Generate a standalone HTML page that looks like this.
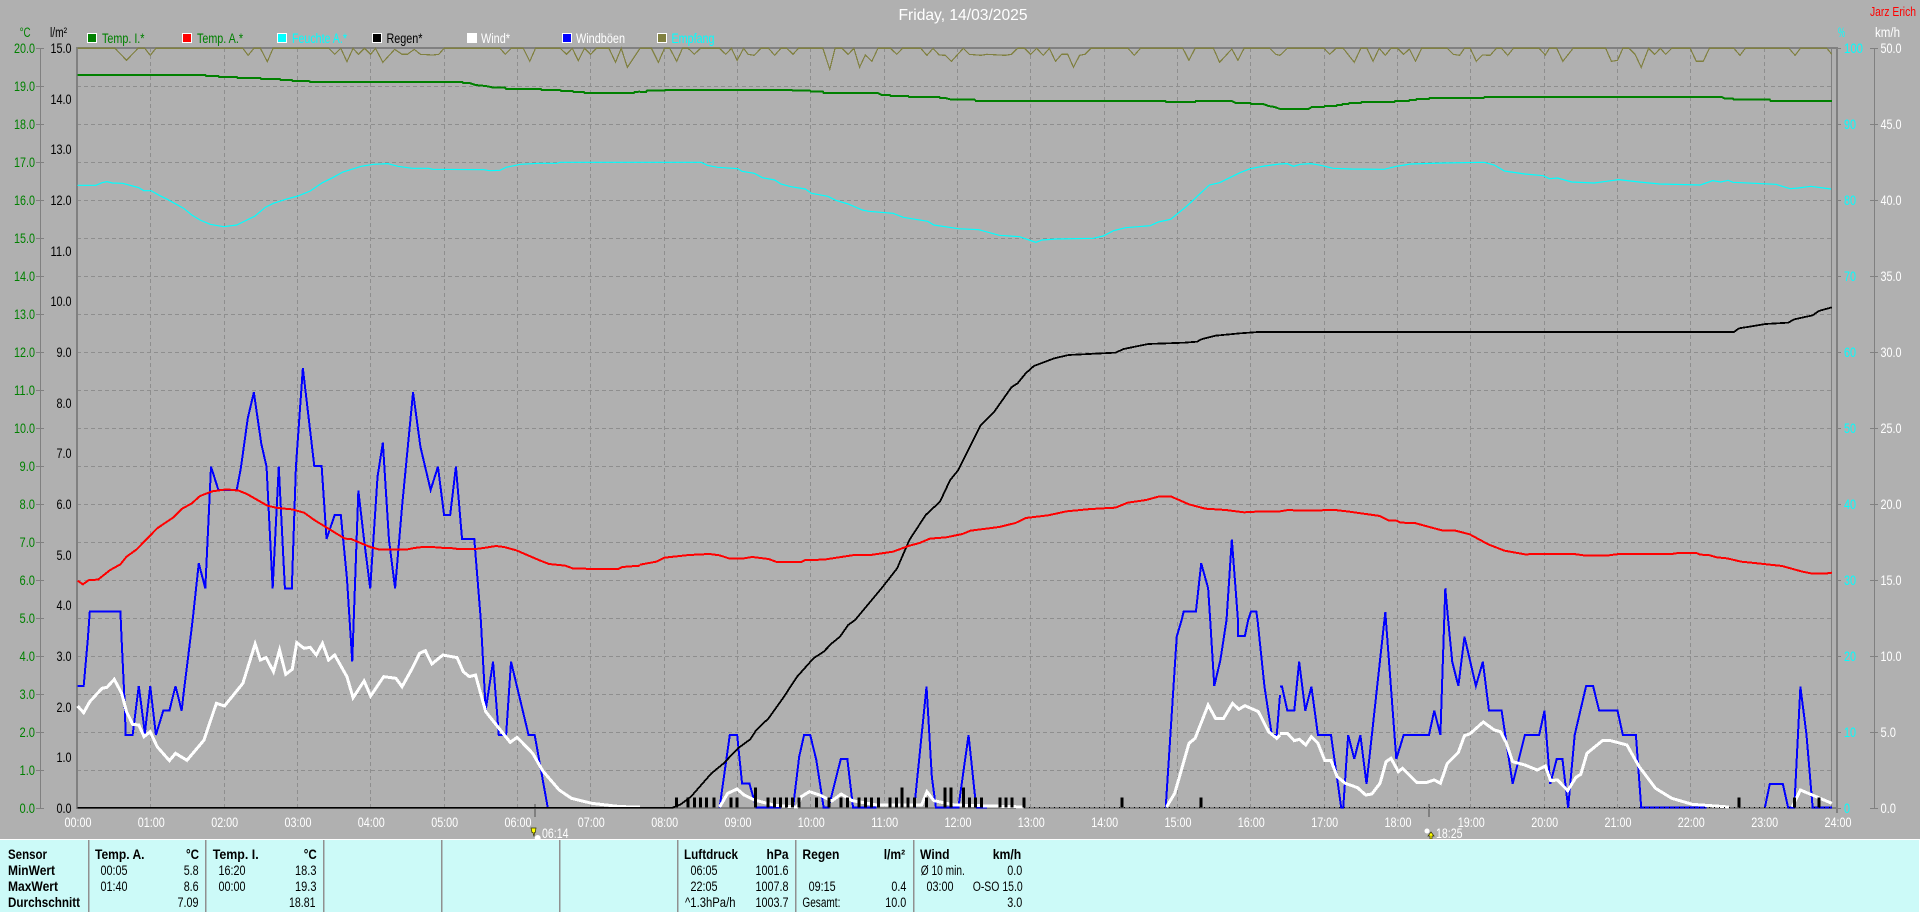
<!DOCTYPE html>
<html lang="de"><head><meta charset="utf-8"><title>Friday, 14/03/2025</title>
<style>
html,body{margin:0;padding:0;background:#b0b0b0;overflow:hidden}
svg{display:block}
text{font-family:"Liberation Sans",sans-serif;font-size:13.5px}
.l polyline,.l path{fill:none;vector-effect:non-scaling-stroke;stroke-linejoin:miter;shape-rendering:crispEdges}
.l .smooth polyline{shape-rendering:auto}
.gr{fill:#008000}.bk{fill:#000}.cy{fill:#0ff}.wh{fill:#fff}
.b{font-weight:bold;fill:#000}.n{fill:#000}
</style></head><body>
<svg width="1920" height="912" viewBox="0 0 1920 912" xmlns="http://www.w3.org/2000/svg">
<rect width="1920" height="912" fill="#b0b0b0"/>
<!-- grid -->
<path shape-rendering="crispEdges" fill="none" stroke="#8e8e8e" stroke-dasharray="4 3" d="M77 86.5H1832M77 124.5H1832M77 162.5H1832M77 200.5H1832M77 238.5H1832M77 276.5H1832M77 314.5H1832M77 352.5H1832M77 390.5H1832M77 428.5H1832M77 466.5H1832M77 504.5H1832M77 542.5H1832M77 580.5H1832M77 618.5H1832M77 656.5H1832M77 694.5H1832M77 732.5H1832M77 770.5H1832"/>
<path shape-rendering="crispEdges" fill="none" stroke="#8e8e8e" stroke-dasharray="4 3" d="M150.5 48V808M224.5 48V808M297.5 48V808M370.5 48V808M444.5 48V808M517.5 48V808M590.5 48V808M664.5 48V808M737.5 48V808M810.5 48V808M884.5 48V808M957.5 48V808M1030.5 48V808M1104.5 48V808M1177.5 48V808M1250.5 48V808M1324.5 48V808M1397.5 48V808M1470.5 48V808M1544.5 48V808M1617.5 48V808M1690.5 48V808M1764.5 48V808"/>
<!-- axes -->
<g shape-rendering="crispEdges" fill="#808080">
<rect x="76" y="47" width="1762" height="2"/>
<rect x="76" y="48" width="2" height="760"/>
<rect x="1831" y="48" width="1" height="760"/>
<rect x="1836" y="47" width="2" height="766"/>
<rect x="40" y="48" width="1" height="760"/>
<rect x="1874" y="48" width="1" height="760"/>
<rect x="76" y="807" width="1762" height="2"/>
<rect x="534" y="804" width="2" height="13"/>
<rect x="1428" y="804" width="2" height="13"/>
</g>
<path shape-rendering="crispEdges" stroke="#808080" fill="none" d="M36 48.5H44M36 86.5H44M36 124.5H44M36 162.5H44M36 200.5H44M36 238.5H44M36 276.5H44M36 314.5H44M36 352.5H44M36 390.5H44M36 428.5H44M36 466.5H44M36 504.5H44M36 542.5H44M36 580.5H44M36 618.5H44M36 656.5H44M36 694.5H44M36 732.5H44M36 770.5H44M36 808.5H44"/>
<path shape-rendering="crispEdges" stroke="#808080" fill="none" d="M1837 48.5H1841M1837 124.5H1841M1837 200.5H1841M1837 276.5H1841M1837 352.5H1841M1837 428.5H1841M1837 504.5H1841M1837 580.5H1841M1837 656.5H1841M1837 732.5H1841M1837 808.5H1841M1870 48.5H1878M1870 124.5H1878M1870 200.5H1878M1870 276.5H1878M1870 352.5H1878M1870 428.5H1878M1870 504.5H1878M1870 580.5H1878M1870 656.5H1878M1870 732.5H1878M1870 808.5H1878"/>

<!-- series -->
<g class="l" transform="scale(.40816 .33333)">
<!-- Empfang -->
<g stroke="#808040" stroke-width="1.2">
<polyline points="190,145 282,145 310,181 338,145 355,145 368,166 382,145 595,145 608,166 622,145 638,145 655,185 669,145 806,145 820,163 835,145 850,185 865,145 878,163 893,145 908,163 920,145 938,187 967,148 985,163 998,163 1015,148 1030,163 1060,165 1075,163 1088,145 1225,145 1238,163 1252,145 1282,145 1298,184 1312,145 1373,145 1388,163 1402,145 1417,182 1432,145 1447,163 1461,145 1492,145 1508,187 1522,145 1537,202 1568,145"/>
<polyline transform="translate(1568 0)" points="0,145 28,145 45,187 60,145 73,145 90,184 104,145 118,145 133,163 148,145 195,145 210,163 224,145 238,181 254,145 265,163 280,166 296,145 315,145 330,166 345,145 360,145 375,163 388,145 448,145 465,208 478,145 495,145 510,163 524,145 538,202 552,165 568,184 583,145 614,145 629,163 643,145 688,145 703,166 718,145 733,165 748,166 763,184 792,145 807,163 835,166 850,163 895,166 910,163 925,145 942,145 957,163 972,145 988,166 1003,145 1018,184 1033,163 1048,163 1062,202 1077,166 1090,163 1105,145 1196,145 1211,166 1226,145 1330,145 1345,181 1360,145 1405,145 1420,187 1450,147 1465,181 1480,145 1543,145 1558,163 1568,166"/>
<polyline transform="translate(3136 0)" points="0,166 18,145 108,145 122,163 137,145 155,145 182,187 198,145 213,145 228,184 243,145 258,166 272,145 288,145 303,163 317,147 332,184 347,145 410,145 425,163 440,166 452,145 466,145 481,184 496,165 515,166 530,145 543,145 558,166 572,145 635,145 650,165 660,145 678,145 693,184 718,145 798,145 812,184 827,181 840,145 855,145 870,163 885,202 903,145 918,163 932,145 945,163 960,145 1005,145 1020,184 1037,184 1052,145 1112,145 1127,166 1140,145 1247,145 1262,166 1275,145 1340,145 1352,163"/>
</g>
<!-- Windboeen -->
<g stroke="#0000ff" stroke-width="2">
<polyline transform="translate(0 1020)" points="190,1038 205,1038 215,900 220,815 295,815 298,900 305,1080 308,1185 325,1185 340,1038 355,1180 368,1038 382,1185 400,1112 415,1112 430,1038 445,1112 452,1038 462,940 472,840 487,670 503,745 517,380 535,450 580,450 590,385 607,235 622,157 640,310 653,380 668,745 683,380 698,745 715,745 725,380 742,85 770,378 788,378 800,597 820,525 835,525 850,715 863,964 878,452 892,600 907,745 925,410 938,308 953,600 968,745 985,500 1012,157 1030,320 1055,450 1073,380 1088,525 1103,525 1117,380 1132,597 1162,597 1178,840 1190,1110 1208,965 1222,1185 1240,1185 1252,965 1295,1185 1310,1185 1342,1403"/>
<polyline transform="translate(1568 1860)" points="195,563 220,345 238,345 250,490 268,490 285,563 345,563"/>
<polyline transform="translate(1568 1860)" points="375,563 390,410 402,345 417,345 432,420 450,563 462,563 492,417 508,417 522,563 580,563"/>
<polyline transform="translate(1568 1860)" points="672,563 690,345 702,200 715,470 725,563 780,563 805,345 820,520 825,563 850,563"/>
<polyline transform="translate(1568 1860)" points="1288,563 1315,50 1327,0 1332,-25 1362,-25 1375,-170 1392,-95 1397,0 1407,198 1422,120 1437,0 1450,-242 1465,0 1465,48 1482,48 1490,0 1497,-25 1510,-25 1513,0 1530,200 1548,345 1560,345 1568,225"/>
<polyline transform="translate(3136 1860)" points="0,200 5,200 18,272 35,272 47,125 62,272 77,200 93,345 125,345 150,563 155,563 167,345 182,417 197,345 212,492 258,-24 285,417 303,345 365,345 378,272 393,345 405,-95 412,0 422,125 437,198 452,50 480,198 497,125 512,272 543,272 570,492 600,345 635,345 648,272 662,492 678,417 692,417 706,563 722,345 750,198 767,198 782,272 827,272 840,345 872,345 885,563 1045,563"/>
<polyline transform="translate(3136 1860)" points="1188,563 1200,492 1232,492 1245,563 1260,563 1275,200 1290,345 1305,563 1352,563"/>
</g>
<!-- Wind -->
<g stroke="#ffffff" stroke-width="3">
<polyline transform="translate(0 1860)" points="190,258 205,278 220,245 250,205 262,202 280,178 298,220 310,275 325,313 340,315 353,350 368,335 385,380 415,422 430,400 458,421 500,360 530,250 550,258 595,190 625,72 638,120 652,113 670,155 685,90 700,163 716,148 727,68 745,85 760,82 775,105 790,70 805,120 820,105 850,170 865,233 892,183 908,228 940,170 970,175 985,200 1010,145 1028,100 1042,92 1058,132 1085,105 1120,113 1135,155 1150,170 1165,165 1190,275 1250,367 1267,352 1305,400 1330,453 1370,510 1400,535 1450,550 1520,560 1568,561"/>
<polyline transform="translate(1568 1860)" points="195,561 215,520 238,507 255,525 280,540 330,556 385,561 395,530 415,515 440,525 470,543 493,522 520,542 580,555 690,555 703,515 720,542 770,555 860,558 940,561"/>
<polyline transform="translate(1568 1860)" points="1290,561 1310,520 1345,370 1360,355 1392,255 1410,295 1430,295 1452,250 1467,268 1482,257 1515,275 1540,335 1560,355 1568,345"/>
<polyline transform="translate(3136 1860)" points="0,340 18,340 35,362 48,358 63,375 77,350 93,370 110,422 125,422 140,470 160,490 190,503 210,525 225,522 245,490 260,425 272,415 290,455 300,445 335,487 360,487 378,480 393,490 410,430 437,397 452,347 465,342 498,306 525,330 540,335 555,370 570,425 600,435 630,450 650,438 663,482 680,480 705,512 725,472 737,463 752,400 790,362 810,362 850,375 880,440 920,505 960,535 1010,553 1100,561"/>
<polyline transform="translate(3136 1860)" points="1255,561 1275,510 1352,550"/>
</g>
<!-- rain bars -->
<path transform="translate(1568 1860)" stroke="#000" stroke-width="3" d="M90 563V532M118 563V532M133 563V532M148 563V532M163 563V532M181 563V532M223 563V532M238 563V532M283 563V502M314 563V532M329 563V532M344 563V532M359 563V532M374 563V532M389 563V532M432 563V532M463 563V532M492 563V532M508 563V532M537 563V532M552 563V532M567 563V532M584 563V532M613 563V532M628 563V532M642 563V502M657 563V532M672 563V532M702 563V532M747 563V502M762 563V502M792 563V502M807 563V532M822 563V532M837 563V532M882 563V532M897 563V532M912 563V532M941 563V532M1181 563V532M1375 563V532"/>
<path transform="translate(3136 1860)" stroke="#000" stroke-width="3" d="M1125 563V532M1260 563V532M1321 563V532"/>
<!-- Regen -->
<g stroke="#000" stroke-width="1.8">
<polyline transform="translate(0 1860)" points="190,563 1568,563"/>
<polyline transform="translate(1568 1860)" points="0,563 80,563 100,553 125,530 175,460 205,430 240,385 270,358 285,330 315,295 350,235 385,170 425,115 450,95 470,70 490,50 510,15 527,0"/>
<polyline transform="translate(1568 900)" points="527,960 595,860 630,805 660,720 700,645 735,605 760,540 780,510 835,375 868,335 910,262 925,250 945,220 965,198 1015,175 1050,165 1165,158 1185,147 1245,132 1335,128 1365,125 1375,118 1410,107 1470,100 1515,96 1568,96"/>
<polyline transform="translate(3136 900)" points="0,96 1112,96 1125,85 1190,72 1245,68 1260,58 1305,46 1320,33 1352,22"/>
</g>
<!-- Feuchte -->
<g class="smooth" stroke="#00ffff" stroke-width="1.2">
<polyline points="190,556 235,556 250,548 262,545 275,549 300,550 325,558 340,563 352,572 370,572 390,586 410,598 450,625 470,645 490,660 515,673 548,680 580,675 600,663 625,648 650,622 670,610 700,598 730,588 760,573 790,548 815,533 840,516 885,499 915,493 950,491 975,499 1010,505 1050,505 1060,508 1185,509 1200,512 1225,511 1240,502 1275,493 1320,490 1365,490 1372,487 1568,487"/>
<polyline transform="translate(1568 0)" points="0,487 150,487 165,496 190,502 240,506 250,514 280,520 300,533 330,540 345,552 370,560 405,567 420,580 460,589 480,601 510,612 545,630 560,634 620,640 645,652 705,664 720,675 780,686 830,689 880,706 930,710 960,723 970,727 985,720 1020,717 1110,715 1135,708 1160,692 1190,683 1250,677 1270,666 1300,658 1340,618 1395,555 1420,548 1470,518 1495,506 1530,498 1568,492"/>
<polyline transform="translate(3136 0)" points="0,492 18,491 33,499 50,493 75,491 100,496 130,505 175,507 255,508 285,499 320,492 400,489 500,487 525,495 550,513 600,522 645,527 660,536 680,534 715,546 770,549 800,544 830,539 880,546 930,552 1030,555 1060,542 1080,546 1098,541 1110,547 1215,553 1250,566 1270,564 1300,559 1350,567"/>
</g>
<!-- Temp A -->
<g stroke="#ff0000" stroke-width="2">
<polyline transform="translate(0 1020)" points="190,722 203,733 218,720 240,719 270,690 295,673 310,650 335,628 385,565 425,532 445,507 470,490 490,468 520,454 555,448 585,452 605,462 655,497 680,504 715,508 745,518 770,540 810,570 845,596 860,597 905,620 930,629 995,629 1015,624 1035,621 1075,622 1085,624 1115,625 1120,627 1165,627 1185,624 1215,618 1235,621 1265,631 1320,660 1345,672 1385,677 1405,686 1515,687 1525,681 1568,677"/>
<polyline transform="translate(1568 900)" points="0,794 40,785 60,773 90,769 120,765 170,762 195,766 220,776 250,776 275,771 315,777 335,786 395,786 405,780 450,779 525,765 565,765 620,755 660,737 685,729 710,716 750,712 790,702 810,692 880,681 920,669 945,654 1000,646 1045,634 1105,627 1165,623 1195,608 1240,600 1270,590 1300,589 1345,613 1385,626 1435,630 1480,637 1510,635 1568,635"/>
<polyline transform="translate(3136 900)" points="0,634 20,630 50,632 95,632 110,630 135,630 170,635 245,648 265,661 285,662 295,668 330,669 375,684 400,692 430,692 465,703 510,733 550,752 600,763 640,762 720,762 750,767 800,767 830,762 960,762 975,759 1020,759 1030,764 1050,765 1070,772 1095,775 1130,785 1170,790 1230,798 1280,815 1305,821 1335,821 1352,818"/>
</g>
<!-- Temp I -->
<g stroke="#008000" stroke-width="2">
<polyline points="190,225 503,225 505,228 535,228 537,231 580,231 582,234 638,234 640,237 686,237 688,240 715,240 717,243 757,243 760,246 1133,246 1135,249 1150,249 1165,255 1190,258 1210,263 1237,263 1240,267 1325,267 1327,270 1372,270 1375,273 1403,273 1405,276 1430,276 1433,279 1553,279 1555,276 1568,275"/>
<polyline transform="translate(1568 0)" points="0,276 15,276 17,272 60,272 62,270 372,270 375,272 417,272 419,275 448,275 450,279 583,279 587,282 592,285 612,285 614,288 657,288 659,291 733,291 735,294 748,294 763,299 820,299 823,303 1287,303 1289,306 1360,306 1362,303 1450,303 1460,309 1495,309 1497,312 1527,312 1540,318 1555,321 1568,327"/>
<polyline transform="translate(3136 0)" points="0,327 70,327 78,321 108,321 110,318 138,318 140,315 152,315 154,312 168,312 170,309 198,309 200,306 280,306 282,303 316,303 318,300 333,300 335,297 365,297 367,294 499,294 501,291 1082,291 1090,296 1110,296 1112,299 1200,299 1202,303 1352,303"/>
</g>
</g>
<!-- baseline dots -->
<path shape-rendering="crispEdges" stroke="#000" fill="none" stroke-dasharray="1 4" d="M1024 807.5H1830"/>

<!-- title -->
<text x="898.5" y="20" style="font-size:16px" class="wh" textLength="129" lengthAdjust="spacingAndGlyphs">Friday, 14/03/2025</text>
<text x="1870" y="16" style="font-size:13px" fill="#ff0000" textLength="46" lengthAdjust="spacingAndGlyphs">Jarz Erich</text>
<text x="19.6" y="37" class="gr" textLength="11" lengthAdjust="spacingAndGlyphs">°C</text>
<text x="50" y="37" class="bk" textLength="17" lengthAdjust="spacingAndGlyphs">l/m²</text>
<text x="1838" y="37" class="cy" textLength="7" lengthAdjust="spacingAndGlyphs">%</text>
<text x="1875" y="37" class="wh" textLength="25" lengthAdjust="spacingAndGlyphs">km/h</text>

<!-- legend -->
<g shape-rendering="crispEdges" stroke="#fff">
<rect x="87.5" y="33.5" width="9" height="9" fill="#008000"/>
<rect x="182.5" y="33.5" width="9" height="9" fill="#ff0000"/>
<rect x="277.5" y="33.5" width="9" height="9" fill="#00ffff"/>
<rect x="372.5" y="33.5" width="9" height="9" fill="#000"/>
<rect x="467.5" y="33.5" width="9" height="9" fill="#fff"/>
<rect x="562.5" y="33.5" width="9" height="9" fill="#0000ff"/>
<rect x="657.5" y="33.5" width="9" height="9" fill="#808040"/>
</g>
<g>
<text x="102" y="43" class="gr" textLength="42.5" lengthAdjust="spacingAndGlyphs">Temp. I.*</text>
<text x="197" y="43" class="gr" textLength="46" lengthAdjust="spacingAndGlyphs">Temp. A.*</text>
<text x="292" y="43" class="cy" textLength="55" lengthAdjust="spacingAndGlyphs">Feuchte A.*</text>
<text x="386.5" y="43" class="bk" textLength="36" lengthAdjust="spacingAndGlyphs">Regen*</text>
<text x="481" y="43" class="wh" textLength="29" lengthAdjust="spacingAndGlyphs">Wind*</text>
<text x="576" y="43" class="wh" textLength="49" lengthAdjust="spacingAndGlyphs">Windböen</text>
<text x="671.5" y="43" class="cy" textLength="43" lengthAdjust="spacingAndGlyphs">Empfang</text>
</g>

<!-- green axis labels -->
<g class="gr">
<text x="14" y="53" textLength="21" lengthAdjust="spacingAndGlyphs">20.0</text>
<text x="14" y="91" textLength="21" lengthAdjust="spacingAndGlyphs">19.0</text>
<text x="14" y="129" textLength="21" lengthAdjust="spacingAndGlyphs">18.0</text>
<text x="14" y="167" textLength="21" lengthAdjust="spacingAndGlyphs">17.0</text>
<text x="14" y="205" textLength="21" lengthAdjust="spacingAndGlyphs">16.0</text>
<text x="14" y="243" textLength="21" lengthAdjust="spacingAndGlyphs">15.0</text>
<text x="14" y="281" textLength="21" lengthAdjust="spacingAndGlyphs">14.0</text>
<text x="14" y="319" textLength="21" lengthAdjust="spacingAndGlyphs">13.0</text>
<text x="14" y="357" textLength="21" lengthAdjust="spacingAndGlyphs">12.0</text>
<text x="14" y="395" textLength="21" lengthAdjust="spacingAndGlyphs">11.0</text>
<text x="14" y="433" textLength="21" lengthAdjust="spacingAndGlyphs">10.0</text>
<text x="19.5" y="471" textLength="15.5" lengthAdjust="spacingAndGlyphs">9.0</text>
<text x="19.5" y="509" textLength="15.5" lengthAdjust="spacingAndGlyphs">8.0</text>
<text x="19.5" y="547" textLength="15.5" lengthAdjust="spacingAndGlyphs">7.0</text>
<text x="19.5" y="585" textLength="15.5" lengthAdjust="spacingAndGlyphs">6.0</text>
<text x="19.5" y="623" textLength="15.5" lengthAdjust="spacingAndGlyphs">5.0</text>
<text x="19.5" y="661" textLength="15.5" lengthAdjust="spacingAndGlyphs">4.0</text>
<text x="19.5" y="699" textLength="15.5" lengthAdjust="spacingAndGlyphs">3.0</text>
<text x="19.5" y="737" textLength="15.5" lengthAdjust="spacingAndGlyphs">2.0</text>
<text x="19.5" y="775" textLength="15.5" lengthAdjust="spacingAndGlyphs">1.0</text>
<text x="19.5" y="813" textLength="15.5" lengthAdjust="spacingAndGlyphs">0.0</text>
</g>
<!-- black axis labels -->
<g class="bk">
<text x="50.5" y="53" textLength="21" lengthAdjust="spacingAndGlyphs">15.0</text>
<text x="50.5" y="104" textLength="21" lengthAdjust="spacingAndGlyphs">14.0</text>
<text x="50.5" y="154" textLength="21" lengthAdjust="spacingAndGlyphs">13.0</text>
<text x="50.5" y="205" textLength="21" lengthAdjust="spacingAndGlyphs">12.0</text>
<text x="50.5" y="256" textLength="21" lengthAdjust="spacingAndGlyphs">11.0</text>
<text x="50.5" y="306" textLength="21" lengthAdjust="spacingAndGlyphs">10.0</text>
<text x="56.5" y="357" textLength="15" lengthAdjust="spacingAndGlyphs">9.0</text>
<text x="56.5" y="408" textLength="15" lengthAdjust="spacingAndGlyphs">8.0</text>
<text x="56.5" y="458" textLength="15" lengthAdjust="spacingAndGlyphs">7.0</text>
<text x="56.5" y="509" textLength="15" lengthAdjust="spacingAndGlyphs">6.0</text>
<text x="56.5" y="560" textLength="15" lengthAdjust="spacingAndGlyphs">5.0</text>
<text x="56.5" y="610" textLength="15" lengthAdjust="spacingAndGlyphs">4.0</text>
<text x="56.5" y="661" textLength="15" lengthAdjust="spacingAndGlyphs">3.0</text>
<text x="56.5" y="712" textLength="15" lengthAdjust="spacingAndGlyphs">2.0</text>
<text x="56.5" y="762" textLength="15" lengthAdjust="spacingAndGlyphs">1.0</text>
<text x="56.5" y="813" textLength="15" lengthAdjust="spacingAndGlyphs">0.0</text>
</g>
<!-- percent labels -->
<g class="cy">
<text x="1844" y="53" textLength="19" lengthAdjust="spacingAndGlyphs">100</text>
<text x="1844" y="129" textLength="12" lengthAdjust="spacingAndGlyphs">90</text>
<text x="1844" y="205" textLength="12" lengthAdjust="spacingAndGlyphs">80</text>
<text x="1844" y="281" textLength="12" lengthAdjust="spacingAndGlyphs">70</text>
<text x="1844" y="357" textLength="12" lengthAdjust="spacingAndGlyphs">60</text>
<text x="1844" y="433" textLength="12" lengthAdjust="spacingAndGlyphs">50</text>
<text x="1844" y="509" textLength="12" lengthAdjust="spacingAndGlyphs">40</text>
<text x="1844" y="585" textLength="12" lengthAdjust="spacingAndGlyphs">30</text>
<text x="1844" y="661" textLength="12" lengthAdjust="spacingAndGlyphs">20</text>
<text x="1844" y="737" textLength="12" lengthAdjust="spacingAndGlyphs">10</text>
<text x="1844" y="813" textLength="6" lengthAdjust="spacingAndGlyphs">0</text>
</g>
<!-- km/h labels -->
<g class="wh">
<text x="1880.5" y="53" textLength="21" lengthAdjust="spacingAndGlyphs">50.0</text>
<text x="1880.5" y="129" textLength="21" lengthAdjust="spacingAndGlyphs">45.0</text>
<text x="1880.5" y="205" textLength="21" lengthAdjust="spacingAndGlyphs">40.0</text>
<text x="1880.5" y="281" textLength="21" lengthAdjust="spacingAndGlyphs">35.0</text>
<text x="1880.5" y="357" textLength="21" lengthAdjust="spacingAndGlyphs">30.0</text>
<text x="1880.5" y="433" textLength="21" lengthAdjust="spacingAndGlyphs">25.0</text>
<text x="1880.5" y="509" textLength="21" lengthAdjust="spacingAndGlyphs">20.0</text>
<text x="1880.5" y="585" textLength="21" lengthAdjust="spacingAndGlyphs">15.0</text>
<text x="1880.5" y="661" textLength="21" lengthAdjust="spacingAndGlyphs">10.0</text>
<text x="1880.5" y="737" textLength="15.5" lengthAdjust="spacingAndGlyphs">5.0</text>
<text x="1880.5" y="813" textLength="15.5" lengthAdjust="spacingAndGlyphs">0.0</text>
</g>
<!-- hour labels -->
<g class="wh">
<text x="64.5" y="827" textLength="27" lengthAdjust="spacingAndGlyphs">00:00</text>
<text x="137.8" y="827" textLength="27" lengthAdjust="spacingAndGlyphs">01:00</text>
<text x="211.2" y="827" textLength="27" lengthAdjust="spacingAndGlyphs">02:00</text>
<text x="284.5" y="827" textLength="27" lengthAdjust="spacingAndGlyphs">03:00</text>
<text x="357.8" y="827" textLength="27" lengthAdjust="spacingAndGlyphs">04:00</text>
<text x="431.2" y="827" textLength="27" lengthAdjust="spacingAndGlyphs">05:00</text>
<text x="504.5" y="827" textLength="27" lengthAdjust="spacingAndGlyphs">06:00</text>
<text x="577.8" y="827" textLength="27" lengthAdjust="spacingAndGlyphs">07:00</text>
<text x="651.2" y="827" textLength="27" lengthAdjust="spacingAndGlyphs">08:00</text>
<text x="724.5" y="827" textLength="27" lengthAdjust="spacingAndGlyphs">09:00</text>
<text x="797.8" y="827" textLength="27" lengthAdjust="spacingAndGlyphs">10:00</text>
<text x="871.2" y="827" textLength="27" lengthAdjust="spacingAndGlyphs">11:00</text>
<text x="944.5" y="827" textLength="27" lengthAdjust="spacingAndGlyphs">12:00</text>
<text x="1017.8" y="827" textLength="27" lengthAdjust="spacingAndGlyphs">13:00</text>
<text x="1091.2" y="827" textLength="27" lengthAdjust="spacingAndGlyphs">14:00</text>
<text x="1164.5" y="827" textLength="27" lengthAdjust="spacingAndGlyphs">15:00</text>
<text x="1237.8" y="827" textLength="27" lengthAdjust="spacingAndGlyphs">16:00</text>
<text x="1311.2" y="827" textLength="27" lengthAdjust="spacingAndGlyphs">17:00</text>
<text x="1384.5" y="827" textLength="27" lengthAdjust="spacingAndGlyphs">18:00</text>
<text x="1457.8" y="827" textLength="27" lengthAdjust="spacingAndGlyphs">19:00</text>
<text x="1531.2" y="827" textLength="27" lengthAdjust="spacingAndGlyphs">20:00</text>
<text x="1604.5" y="827" textLength="27" lengthAdjust="spacingAndGlyphs">21:00</text>
<text x="1677.8" y="827" textLength="27" lengthAdjust="spacingAndGlyphs">22:00</text>
<text x="1751.2" y="827" textLength="27" lengthAdjust="spacingAndGlyphs">23:00</text>
<text x="1824.5" y="827" textLength="27" lengthAdjust="spacingAndGlyphs">24:00</text>
</g>

<!-- sunrise / sunset -->
<path fill="#ffff00" stroke="#303000" stroke-width=".7" d="M531 828H536L535.2 832.5H534.5L534 836.5L533 832.5H532Z"/>
<circle cx="537.7" cy="838" r="3" fill="#fff"/>
<text x="542" y="838" class="wh" textLength="26.5" lengthAdjust="spacingAndGlyphs">06:14</text>
<circle cx="1427" cy="831" r="2.5" fill="#fff"/>
<path fill="#ffff00" stroke="#303000" stroke-width=".7" d="M1431 832L1434 836H1432V839H1430V836H1428Z"/>
<text x="1436" y="838" class="wh" textLength="26.5" lengthAdjust="spacingAndGlyphs">18:25</text>

<!-- panel -->
<rect x="0" y="840" width="1920" height="72" fill="#ccfaf8"/>
<rect x="0" y="839" width="1920" height="1" fill="#fff" shape-rendering="crispEdges"/>
<rect x="1919" y="839" width="1" height="73" fill="#fff"/>
<g fill="#909090">
<rect x="88" y="840" width="1.5" height="72"/>
<rect x="205" y="840" width="1.5" height="72"/>
<rect x="323" y="840" width="1.5" height="72"/>
<rect x="441" y="840" width="1.5" height="72"/>
<rect x="559" y="840" width="1.5" height="72"/>
<rect x="677" y="840" width="1.5" height="72"/>
<rect x="795" y="840" width="1.5" height="72"/>
<rect x="913" y="840" width="1.5" height="72"/>
</g>
<g class="n">
<text class="b" x="8" y="859" textLength="39" lengthAdjust="spacingAndGlyphs">Sensor</text>
<text class="b" x="8" y="875" textLength="47" lengthAdjust="spacingAndGlyphs">MinWert</text>
<text class="b" x="8" y="891" textLength="50" lengthAdjust="spacingAndGlyphs">MaxWert</text>
<text class="b" x="8" y="907" textLength="72" lengthAdjust="spacingAndGlyphs">Durchschnitt</text>

<text class="b" x="95" y="859" textLength="49.5" lengthAdjust="spacingAndGlyphs">Temp. A.</text>
<text class="b" x="186" y="859" textLength="13" lengthAdjust="spacingAndGlyphs">°C</text>
<text x="100.5" y="875" textLength="27" lengthAdjust="spacingAndGlyphs">00:05</text>
<text x="183.7" y="875" textLength="15" lengthAdjust="spacingAndGlyphs">5.8</text>
<text x="100.5" y="891" textLength="27" lengthAdjust="spacingAndGlyphs">01:40</text>
<text x="183.7" y="891" textLength="15" lengthAdjust="spacingAndGlyphs">8.6</text>
<text x="177.5" y="907" textLength="21" lengthAdjust="spacingAndGlyphs">7.09</text>

<text class="b" x="212.7" y="859" textLength="46" lengthAdjust="spacingAndGlyphs">Temp. I.</text>
<text class="b" x="303.7" y="859" textLength="13" lengthAdjust="spacingAndGlyphs">°C</text>
<text x="218.5" y="875" textLength="27" lengthAdjust="spacingAndGlyphs">16:20</text>
<text x="295" y="875" textLength="21.5" lengthAdjust="spacingAndGlyphs">18.3</text>
<text x="218.5" y="891" textLength="27" lengthAdjust="spacingAndGlyphs">00:00</text>
<text x="295" y="891" textLength="21.5" lengthAdjust="spacingAndGlyphs">19.3</text>
<text x="289" y="907" textLength="26.5" lengthAdjust="spacingAndGlyphs">18.81</text>

<text class="b" x="684" y="859" textLength="54" lengthAdjust="spacingAndGlyphs">Luftdruck</text>
<text class="b" x="766.5" y="859" textLength="22" lengthAdjust="spacingAndGlyphs">hPa</text>
<text x="690.5" y="875" textLength="27" lengthAdjust="spacingAndGlyphs">06:05</text>
<text x="755.5" y="875" textLength="33" lengthAdjust="spacingAndGlyphs">1001.6</text>
<text x="690.5" y="891" textLength="27" lengthAdjust="spacingAndGlyphs">22:05</text>
<text x="755.5" y="891" textLength="33" lengthAdjust="spacingAndGlyphs">1007.8</text>
<text x="685" y="907" textLength="50.5" lengthAdjust="spacingAndGlyphs">^1.3hPa/h</text>
<text x="755.5" y="907" textLength="33" lengthAdjust="spacingAndGlyphs">1003.7</text>

<text class="b" x="802.4" y="859" textLength="37" lengthAdjust="spacingAndGlyphs">Regen</text>
<text class="b" x="883.7" y="859" textLength="21.5" lengthAdjust="spacingAndGlyphs">l/m²</text>
<text x="808.6" y="891" textLength="27" lengthAdjust="spacingAndGlyphs">09:15</text>
<text x="891.4" y="891" textLength="15" lengthAdjust="spacingAndGlyphs">0.4</text>
<text x="802.4" y="907" textLength="38" lengthAdjust="spacingAndGlyphs">Gesamt:</text>
<text x="885.3" y="907" textLength="21" lengthAdjust="spacingAndGlyphs">10.0</text>

<text class="b" x="920" y="859" textLength="29.5" lengthAdjust="spacingAndGlyphs">Wind</text>
<text class="b" x="992.7" y="859" textLength="28.5" lengthAdjust="spacingAndGlyphs">km/h</text>
<text x="920.8" y="875" textLength="44" lengthAdjust="spacingAndGlyphs">Ø 10 min.</text>
<text x="1007.3" y="875" textLength="15" lengthAdjust="spacingAndGlyphs">0.0</text>
<text x="926.5" y="891" textLength="27" lengthAdjust="spacingAndGlyphs">03:00</text>
<text x="972.7" y="891" textLength="50" lengthAdjust="spacingAndGlyphs">O-SO 15.0</text>
<text x="1007.3" y="907" textLength="15" lengthAdjust="spacingAndGlyphs">3.0</text>
</g>
</svg>
</body></html>
